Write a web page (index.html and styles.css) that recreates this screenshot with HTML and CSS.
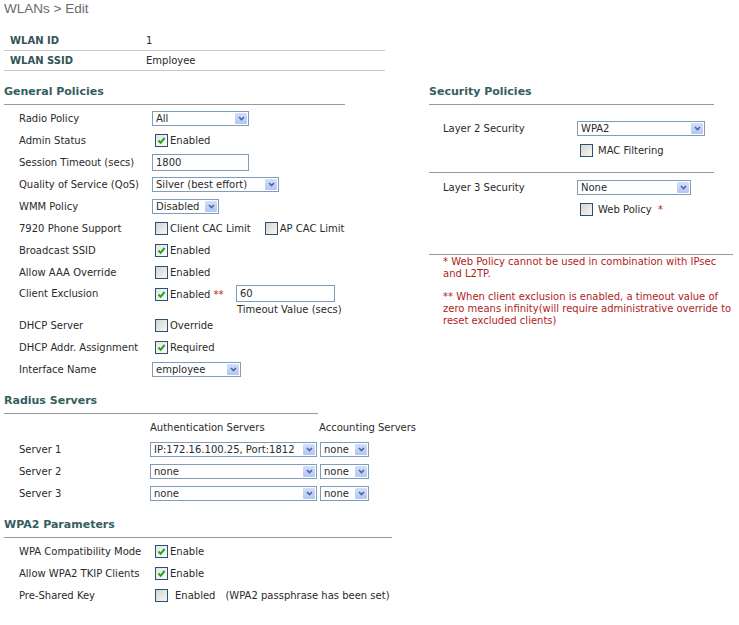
FILE: index.html
```html
<!DOCTYPE html>
<html lang="en">
<head>
  <meta charset="UTF-8">
  <title>WLANs &gt; Edit</title>
  <link rel="stylesheet" href="styles.css">
</head>
<body>
<div class="page">

  <div class="title">WLANs &gt; Edit</div>

  <!-- WLAN ident -->
  <div class="ident">
    <div class="ident-row"><span class="key">WLAN ID</span><span>1</span></div>
    <div class="ident-row"><span class="key">WLAN SSID</span><span>Employee</span></div>
  </div>

  <div class="columns">
    <div class="col-left">

      <!-- General Policies -->
      <div class="sec-head w-general">General Policies</div>
      <div class="rows">
        <div class="row">
          <span class="lbl">Radio Policy</span>
          <div class="sel w-radio"><span class="txt">All</span><span class="arr"><svg width="7" height="5" viewBox="0 0 7 5"><polyline points="1,1 3.5,3.6 6,1" fill="none" stroke="#4a64a0" stroke-width="1.6"/></svg></span></div>
        </div>
        <div class="row">
          <span class="lbl">Admin Status</span>
          <span class="cb on"><svg width="9" height="9" viewBox="0 0 9 9"><polyline points="1.5,4.5 3.6,6.8 7.6,2" fill="none" stroke="#22a322" stroke-width="2"/></svg></span><span>Enabled</span>
        </div>
        <div class="row">
          <span class="lbl">Session Timeout (secs)</span>
          <div class="inp w-session">1800</div>
        </div>
        <div class="row">
          <span class="lbl">Quality of Service (QoS)</span>
          <div class="sel w-qos"><span class="txt">Silver (best effort)</span><span class="arr"><svg width="7" height="5" viewBox="0 0 7 5"><polyline points="1,1 3.5,3.6 6,1" fill="none" stroke="#4a64a0" stroke-width="1.6"/></svg></span></div>
        </div>
        <div class="row">
          <span class="lbl">WMM Policy</span>
          <div class="sel w-wmm"><span class="txt">Disabled</span><span class="arr"><svg width="7" height="5" viewBox="0 0 7 5"><polyline points="1,1 3.5,3.6 6,1" fill="none" stroke="#4a64a0" stroke-width="1.6"/></svg></span></div>
        </div>
        <div class="row">
          <span class="lbl">7920 Phone Support</span>
          <span class="cb"></span><span class="opt">Client CAC Limit</span>
          <span class="cb"></span><span>AP CAC Limit</span>
        </div>
        <div class="row">
          <span class="lbl">Broadcast SSID</span>
          <span class="cb on"><svg width="9" height="9" viewBox="0 0 9 9"><polyline points="1.5,4.5 3.6,6.8 7.6,2" fill="none" stroke="#22a322" stroke-width="2"/></svg></span><span>Enabled</span>
        </div>
        <div class="row">
          <span class="lbl">Allow AAA Override</span>
          <span class="cb"></span><span>Enabled</span>
        </div>
        <div class="row tall">
          <span class="lbl">Client Exclusion</span>
          <div class="excl">
            <span class="cb on"><svg width="9" height="9" viewBox="0 0 9 9"><polyline points="1.5,4.5 3.6,6.8 7.6,2" fill="none" stroke="#22a322" stroke-width="2"/></svg></span><span>Enabled</span><span class="star">**</span>
          </div>
          <div class="excl-val">
            <div class="inp w-excl">60</div>
            <div class="caption">Timeout Value (secs)</div>
          </div>
        </div>
        <div class="row">
          <span class="lbl">DHCP Server</span>
          <span class="cb"></span><span>Override</span>
        </div>
        <div class="row">
          <span class="lbl">DHCP Addr. Assignment</span>
          <span class="cb on"><svg width="9" height="9" viewBox="0 0 9 9"><polyline points="1.5,4.5 3.6,6.8 7.6,2" fill="none" stroke="#22a322" stroke-width="2"/></svg></span><span>Required</span>
        </div>
        <div class="row">
          <span class="lbl">Interface Name</span>
          <div class="sel w-iface"><span class="txt">employee</span><span class="arr"><svg width="7" height="5" viewBox="0 0 7 5"><polyline points="1,1 3.5,3.6 6,1" fill="none" stroke="#4a64a0" stroke-width="1.6"/></svg></span></div>
        </div>
      </div>

      <!-- Radius Servers -->
      <div class="sec-head w-radius">Radius Servers</div>
      <div class="rows radius">
        <div class="row">
          <span class="lbl"></span>
          <span class="col-auth">Authentication Servers</span>
          <span>Accounting Servers</span>
        </div>
        <div class="row">
          <span class="lbl">Server 1</span>
          <div class="sel w-auth"><span class="txt">IP:172.16.100.25, Port:1812</span><span class="arr"><svg width="7" height="5" viewBox="0 0 7 5"><polyline points="1,1 3.5,3.6 6,1" fill="none" stroke="#4a64a0" stroke-width="1.6"/></svg></span></div>
          <div class="sel w-acct"><span class="txt">none</span><span class="arr"><svg width="7" height="5" viewBox="0 0 7 5"><polyline points="1,1 3.5,3.6 6,1" fill="none" stroke="#4a64a0" stroke-width="1.6"/></svg></span></div>
        </div>
        <div class="row">
          <span class="lbl">Server 2</span>
          <div class="sel w-auth"><span class="txt">none</span><span class="arr"><svg width="7" height="5" viewBox="0 0 7 5"><polyline points="1,1 3.5,3.6 6,1" fill="none" stroke="#4a64a0" stroke-width="1.6"/></svg></span></div>
          <div class="sel w-acct"><span class="txt">none</span><span class="arr"><svg width="7" height="5" viewBox="0 0 7 5"><polyline points="1,1 3.5,3.6 6,1" fill="none" stroke="#4a64a0" stroke-width="1.6"/></svg></span></div>
        </div>
        <div class="row">
          <span class="lbl">Server 3</span>
          <div class="sel w-auth"><span class="txt">none</span><span class="arr"><svg width="7" height="5" viewBox="0 0 7 5"><polyline points="1,1 3.5,3.6 6,1" fill="none" stroke="#4a64a0" stroke-width="1.6"/></svg></span></div>
          <div class="sel w-acct"><span class="txt">none</span><span class="arr"><svg width="7" height="5" viewBox="0 0 7 5"><polyline points="1,1 3.5,3.6 6,1" fill="none" stroke="#4a64a0" stroke-width="1.6"/></svg></span></div>
        </div>
      </div>

      <!-- WPA2 Parameters -->
      <div class="sec-head w-wpa">WPA2 Parameters</div>
      <div class="rows">
        <div class="row">
          <span class="lbl">WPA Compatibility Mode</span>
          <span class="cb on"><svg width="9" height="9" viewBox="0 0 9 9"><polyline points="1.5,4.5 3.6,6.8 7.6,2" fill="none" stroke="#22a322" stroke-width="2"/></svg></span><span>Enable</span>
        </div>
        <div class="row">
          <span class="lbl">Allow WPA2 TKIP Clients</span>
          <span class="cb on"><svg width="9" height="9" viewBox="0 0 9 9"><polyline points="1.5,4.5 3.6,6.8 7.6,2" fill="none" stroke="#22a322" stroke-width="2"/></svg></span><span>Enable</span>
        </div>
        <div class="row">
          <span class="lbl">Pre-Shared Key</span>
          <span class="cb"></span><span class="psk">Enabled</span><span>(WPA2 passphrase has been set)</span>
        </div>
      </div>

    </div>

    <div class="col-right">
      <!-- Security Policies -->
      <div class="sec-head w-security">Security Policies</div>
      <div class="sec-block first">
        <div class="row">
          <span class="lbl">Layer 2 Security</span>
          <div class="sel w-l2"><span class="txt">WPA2</span><span class="arr"><svg width="7" height="5" viewBox="0 0 7 5"><polyline points="1,1 3.5,3.6 6,1" fill="none" stroke="#4a64a0" stroke-width="1.6"/></svg></span></div>
        </div>
        <div class="row">
          <span class="lbl"></span>
          <span class="cb"></span><span class="sub">MAC Filtering</span>
        </div>
      </div>
      <div class="sep w-security"></div>
      <div class="sec-block">
        <div class="row">
          <span class="lbl">Layer 3 Security</span>
          <div class="sel w-l3"><span class="txt">None</span><span class="arr"><svg width="7" height="5" viewBox="0 0 7 5"><polyline points="1,1 3.5,3.6 6,1" fill="none" stroke="#4a64a0" stroke-width="1.6"/></svg></span></div>
        </div>
        <div class="row">
          <span class="lbl"></span>
          <span class="cb"></span><span class="sub">Web Policy <span class="star">*</span></span>
        </div>
      </div>
      <div class="sep wide"></div>
      <div class="notes">
        <p>* Web Policy cannot be used in combination with IPsec<br>and L2TP.</p>
        <p>** When client exclusion is enabled, a timeout value of<br>zero means infinity(will require administrative override to<br>reset excluded clients)</p>
      </div>
    </div>
  </div>

</div>
</body>
</html>
```

FILE: styles.css
```css
body {
  margin: 0;
  font-family: "DejaVu Sans", Verdana, sans-serif;
  font-size: 10px;
  color: #2a2a2a;
  background: #fff;
}

.page {
  padding: 0 4px;
}

.title {
  font-family: "Liberation Sans", Arial, sans-serif;
  font-size: 13.5px;
  line-height: 17px;
  color: #6a6a6a;
}

/* WLAN ID / SSID */
.ident {
  margin-top: 14px;
  width: 381px;
}

.ident-row {
  display: flex;
  align-items: center;
  height: 19px;
  border-bottom: 1px solid #c8c8c8;
}

.ident-row .key {
  width: 142px;
  padding-left: 6px;
  box-sizing: border-box;
  font-weight: bold;
  color: #345454;
}

.columns {
  display: flex;
}

.col-left {
  width: 425px;
}

.col-right {
  width: 304px;
}

/* headings */
.sec-head {
  margin-top: 14px;
  font-size: 11px;
  font-weight: bold;
  line-height: 14px;
  color: #345e5e;
  padding-bottom: 5px;
  border-bottom: 1px solid #9a9a9a;
}

.w-general { width: 341px; }
.w-radius { width: 314px; }
.w-wpa { width: 388px; }
.w-security { width: 285px; }

.rows {
  margin-top: 2px;
}

.row {
  display: flex;
  align-items: center;
  height: 22px;
  white-space: nowrap;
}

.row .lbl {
  width: 148px;
  padding-left: 15px;
  box-sizing: border-box;
  flex-shrink: 0;
}

.radius .row .lbl {
  width: 146px;
}

.col-right .row .lbl {
  width: 148px;
  padding-left: 14px;
}

/* checkbox */
.cb {
  display: inline-flex;
  align-items: center;
  justify-content: center;
  width: 11px;
  height: 11px;
  margin: 0 2px 0 3px;
  border: 1px solid #2a4f78;
  background: linear-gradient(135deg, #d6d6d0, #f6f6f3);
  flex-shrink: 0;
}

.cb.on {
  background: linear-gradient(135deg, #e4e4df, #fbfbf9);
}

.opt {
  margin-right: 11px;
}

.psk {
  margin-left: 5px;
  margin-right: 10px;
}

.sub {
  margin-left: 3px;
}

.star {
  color: #c01818;
  margin-left: 3px;
}

/* select box */
.sel {
  display: flex;
  align-items: center;
  height: 15px;
  box-sizing: border-box;
  border: 1px solid #7f9db9;
  background: #fff;
  padding-left: 3px;
}

.sel .txt {
  flex: 1;
  overflow: hidden;
  white-space: nowrap;
}

.sel .arr {
  display: flex;
  align-items: center;
  justify-content: center;
  width: 12px;
  height: 11px;
  margin-right: 1px;
  background: linear-gradient(#d3defc, #b3c6f3);
  border-radius: 1px;
}

.w-radio { width: 97px; }
.w-qos { width: 127px; }
.w-wmm { width: 67px; }
.w-iface { width: 89px; }
.w-auth { width: 167px; }
.w-acct { width: 49px; margin-left: 3px; }
.w-l2 { width: 128px; }
.w-l3 { width: 114px; }

/* text input */
.inp {
  height: 17px;
  line-height: 15px;
  box-sizing: border-box;
  border: 1px solid #7f9db9;
  padding-left: 3px;
  background: #fff;
}

.w-session { width: 97px; }
.w-excl { width: 99px; }

/* client exclusion */
.row.tall {
  height: 31px;
  align-items: flex-start;
}

.row.tall .lbl {
  line-height: 22px;
}

.excl {
  display: flex;
  align-items: center;
  height: 22px;
  width: 84px;
}

.excl-val {
  padding-top: 2px;
}

.caption {
  margin-top: 2px;
  line-height: 12px;
  padding-left: 1px;
}

.col-auth {
  width: 169px;
}

/* security column */
.sec-block {
  margin-top: 3px;
}

.sec-block.first {
  margin-top: 12px;
}

.sep {
  margin-top: 11px;
  border-top: 1px solid #9a9a9a;
}

.sep.wide {
  margin-top: 34px;
  width: 304px;
}

.notes {
  padding-left: 14px;
  color: #b01c1c;
  line-height: 12px;
  white-space: nowrap;
}

.notes p {
  margin: 1px 0 11px;
}
```
